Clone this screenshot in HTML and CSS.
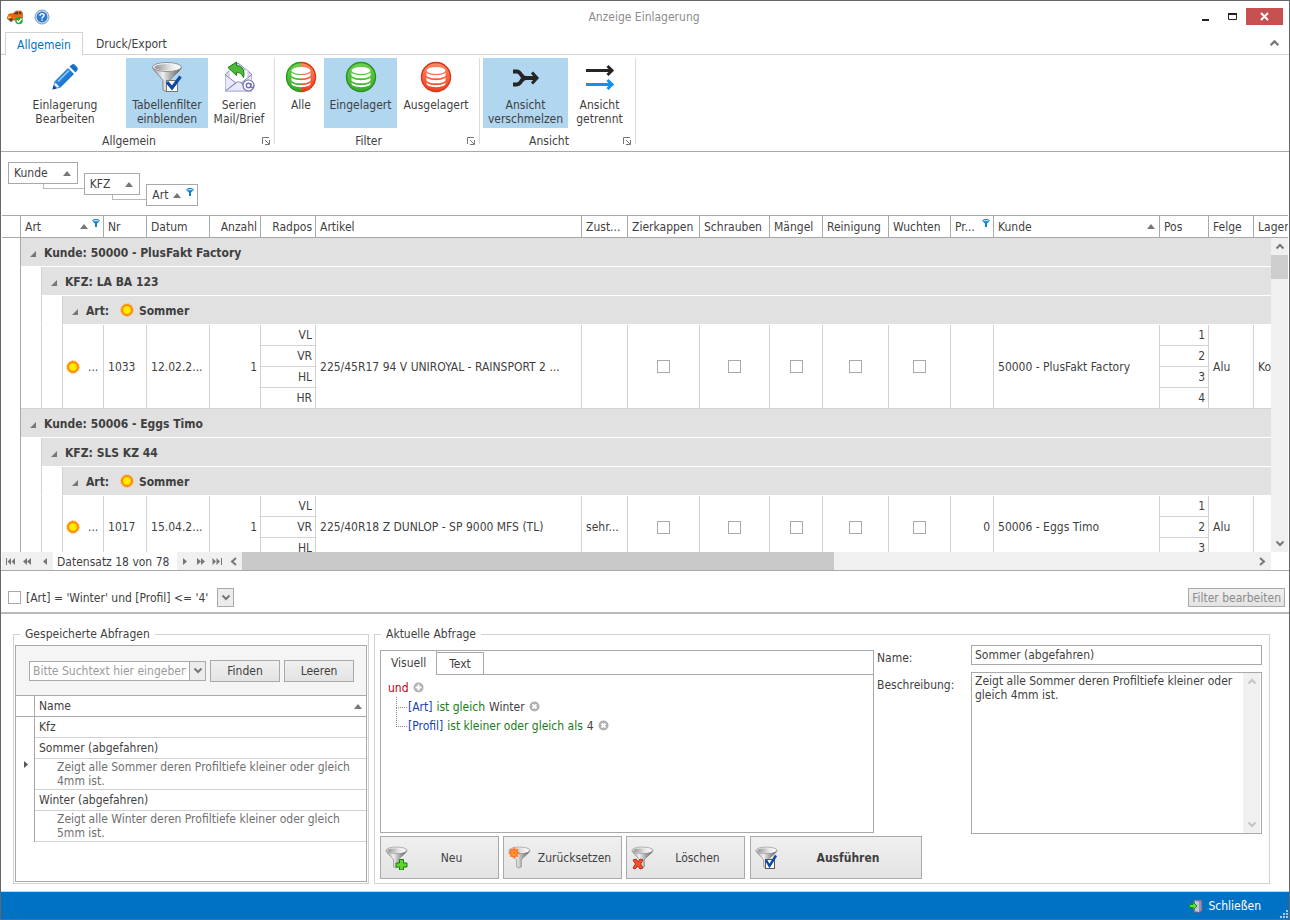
FILE: index.html
```
<!DOCTYPE html>
<html lang="de">

<head>
    <meta charset="utf-8">
    <meta name="viewport" content="width=device-width, initial-scale=1">
    <title>Anzeige Einlagerung</title>
    <link rel="stylesheet" href="styles.css">
</head>

<body>
    <!-- shared icons -->
    <svg class="sprite" aria-hidden="true">
        <defs>
            <linearGradient id="metal" x1="0" x2="1" y1="0" y2="0">
                <stop offset="0" stop-color="#9a9a9a" />
                <stop offset="0.35" stop-color="#f0f0f0" />
                <stop offset="0.6" stop-color="#b0b0b0" />
                <stop offset="1" stop-color="#5d5d5d" />
            </linearGradient>
            <linearGradient id="metalTop" x1="0" x2="1" y1="0" y2="0">
                <stop offset="0" stop-color="#8f8f8f" />
                <stop offset="0.6" stop-color="#e2e2e2" />
                <stop offset="1" stop-color="#ffffff" />
            </linearGradient>
            <linearGradient id="green" x1="0" x2="0" y1="0" y2="1">
                <stop offset="0" stop-color="#6fd04f" />
                <stop offset="1" stop-color="#35ab2a" />
            </linearGradient>
            <linearGradient id="red" x1="0" x2="0" y1="0" y2="1">
                <stop offset="0" stop-color="#ff8a62" />
                <stop offset="1" stop-color="#f2401f" />
            </linearGradient>
            <linearGradient id="pen" x1="0" x2="1" y1="0" y2="1">
                <stop offset="0" stop-color="#3a9af0" />
                <stop offset="1" stop-color="#0a5fc0" />
            </linearGradient>
            <radialGradient id="sunFill">
                <stop offset="0.4" stop-color="#ffee00" />
                <stop offset="1" stop-color="#ffd000" />
            </radialGradient>
        </defs>
        <symbol id="funnel" viewBox="0 0 32 32">
            <path d="M1.500 6C2 10 9 14.500 12 19.500V29L15 30.500L18.500 29V19.500C22 14.500 30 10 30.500 6Z" fill="url(#metal)" stroke="#707070" stroke-width="0.800" />
            <ellipse cx="16" cy="6" rx="14.500" ry="4.500" fill="#f2f2f2" stroke="#808080" stroke-width="0.800" />
            <ellipse cx="16" cy="6.300" rx="12.500" ry="3.300" fill="url(#metalTop)" />
        </symbol>
        <symbol id="sun" viewBox="0 0 14 14">
            <circle cx="7" cy="7" r="5" fill="url(#sunFill)" stroke="#ff8a00" stroke-width="2" />
            <circle cx="7" cy="7" r="6.200" fill="none" stroke="#ff9a20" stroke-width="1" stroke-dasharray="1.500 1.200" />
        </symbol>
        <symbol id="disks" viewBox="0 0 32 32">
            <g fill="#fff">
                <ellipse cx="16" cy="9.500" rx="9.500" ry="3.500" />
                <path d="M6.500 11.500C9 15 23 15 25.500 11.500V14.500C23 18.300 9 18.300 6.500 14.500Z" />
                <path d="M6.500 16.500C9 20 23 20 25.500 16.500V19.500C23 23.300 9 23.300 6.500 19.500Z" />
                <path d="M6.500 21.500C9 25 23 25 25.500 21.500V23C23 27.200 9 27.200 6.500 23Z" />
            </g>
        </symbol>
        <symbol id="pin" viewBox="0 0 8 8">
            <path d="M0.500 2L3 4.500V8H5V4.500L7.500 2Z" fill="#0f80d0" />
            <ellipse cx="4" cy="1.700" rx="3.500" ry="1.200" fill="#bfe0f6" stroke="#0f80d0" />
        </symbol>
        <symbol id="up" viewBox="0 0 8 5">
            <path d="M0 5L4 0L8 5Z" fill="#777" />
        </symbol>
        <symbol id="open" viewBox="0 0 6 6">
            <path d="M6 0V6H0Z" fill="#777" />
        </symbol>
        <symbol id="chevUp" viewBox="0 0 10 7">
            <path d="M1.500 5.500L5 2L8.500 5.500" fill="none" stroke="currentColor" stroke-width="2" />
        </symbol>
        <symbol id="chevDown" viewBox="0 0 10 7">
            <path d="M1.500 1.500L5 5L8.500 1.500" fill="none" stroke="currentColor" stroke-width="2" />
        </symbol>
        <symbol id="launcher" viewBox="0 0 8 8">
            <path d="M0.500 7V0.500H7M3 3L7 7M7.500 3V7.500H3" fill="none" stroke="#777" />
        </symbol>
    </svg>

    <div class="window">
        <header class="titlebar">
            <svg class="icon-16" viewBox="0 0 16 16">
                <path d="M0.500 8L2 5L6 4.500L9 2H14L15.500 4V9L13 11H2L0.500 10Z" fill="#ec6a0c" stroke="#b84e08" stroke-width="0.600" />
                <path d="M6.500 5L9.300 3H11V5.500Z M12 3H13.800L14.500 5H12Z" fill="#4a3a30" />
                <circle cx="4" cy="11" r="1.700" fill="#444" />
                <path d="M1 8.300H4" stroke="#ffe27a" stroke-width="1.200" />
                <circle cx="12" cy="11.500" r="3.800" fill="#36a33a" />
                <path d="M9.800 11.500L11.600 13.300L14.500 9.800" fill="none" stroke="#fff" stroke-width="1.400" />
            </svg>
            <svg class="icon-16" viewBox="0 0 16 16">
                <circle cx="8" cy="8" r="7" fill="#c9dcf0" stroke="#7f9fc4" />
                <circle cx="8" cy="8" r="5.400" fill="#2f78cc" />
                <path d="M6 6.700C6 4.200 10 4.200 10 6.500C10 7.900 8 7.800 8 9.400M8 10.400V11.800" fill="none" stroke="#fff" stroke-width="1.500" />
            </svg>
            <h1>Anzeige Einlagerung</h1>
            <div class="win-buttons">
                <button class="win-btn" aria-label="Minimieren"><svg width="9" height="9"><path d="M1 8H8" stroke="#222" stroke-width="2" /></svg></button>
                <button class="win-btn" aria-label="Maximieren"><svg width="9" height="9"><path d="M0.500 1.500V7.500H8.500V1.500" fill="none" stroke="#222" /><path d="M0 2H9" stroke="#222" stroke-width="2" /></svg></button>
                <button class="win-btn win-close" aria-label="Beenden"><svg width="9" height="9"><path d="M1 1L8 8M8 1L1 8" stroke="#fff" stroke-width="2" /></svg></button>
            </div>
        </header>

        <nav class="tabs">
            <button class="tab active">Allgemein</button>
            <button class="tab">Druck/Export</button>
            <button class="collapse" aria-label="Menüband minimieren"><svg width="11" height="8"><use href="#chevUp" /></svg></button>
        </nav>

        <section class="ribbon">
            <div class="group">
                <div class="group-buttons">
                    <button class="tool tool-edit">
                        <svg viewBox="0 0 32 32">
                            <path d="M3.500 28.500L5.500 20.500L19 7L25 13L11.500 26.500Z" fill="url(#pen)" />
                            <path d="M6.200 21.500L10.500 25.800L8 26.800L5.200 24Z" fill="#e8f3ff" />
                            <path d="M3.500 28.500L4.500 24.500L7.500 27.500Z" fill="#084a94" />
                            <path d="M9 20.500L20 9.500" stroke="#9bd0ff" stroke-width="1.500" />
                            <path d="M20.500 5.500L23 3.500Q24.500 2.500 26 4L28 6Q29.500 7.500 28.500 9L26.500 11.500Z" fill="#176fd2" />
                        </svg>
                        <span>Einlagerung<br>Bearbeiten</span>
                    </button>
                    <button class="tool tool-filter active">
                        <svg viewBox="0 0 32 32">
                            <use href="#funnel" width="32" height="32" />
                            <rect x="15.500" y="19.500" width="11" height="11" fill="#fff" stroke="#777" />
                            <path d="M16 21L21 27L29.500 15.500" fill="none" stroke="#0d47a8" stroke-width="3.200" />
                        </svg>
                        <span>Tabellenfilter<br>einblenden</span>
                    </button>
                    <button class="tool tool-mail">
                        <svg viewBox="0 0 32 32">
                            <path d="M2.500 13L15 2L28.500 13V30H2.500Z" fill="#d9d9f2" stroke="#8a8ac4" />
                            <path d="M6 9H25V18L16 23L6 18Z" fill="#fff" stroke="#c5c5e2" />
                            <path d="M2.500 14L13 22L2.500 30M28.500 14L18 22L28.500 30M3 29.500L13 21.500Q15.500 20 18 21.500L28 29.500" fill="#e9e9fa" stroke="#8a8ac4" />
                            <path d="M5 6.500L13.500 1V4.500C20 5 22 10 20.500 16.500C18.500 12.500 17 11.500 13.500 11.500V14.500Z" fill="#4cba35" stroke="#1d7a16" />
                            <circle cx="25.500" cy="24.500" r="5.500" fill="#fff" stroke="#6f6fb4" stroke-width="1.200" />
                            <circle cx="25.500" cy="24.500" r="2.200" fill="none" stroke="#6f6fb4" stroke-width="1.400" />
                            <path d="M28 22V26.500Q30 27.500 31 24.500" fill="none" stroke="#6f6fb4" stroke-width="1.200" />
                        </svg>
                        <span>Serien<br>Mail/Brief</span>
                    </button>
                </div>
                <div class="caption"><span>Allgemein</span><svg width="8" height="8"><use href="#launcher" /></svg></div>
            </div>
            <div class="group">
                <div class="group-buttons">
                    <button class="tool tool-all">
                        <svg viewBox="0 0 32 32">
                            <path d="M16 0.800A15.200 15.200 0 0 0 16 31.200Z" fill="#2b951f" />
                            <path d="M16 0.800A15.200 15.200 0 0 1 16 31.200Z" fill="#d8351a" />
                            <path d="M16 2.200A13.800 13.800 0 0 0 16 29.800Z" fill="url(#green)" />
                            <path d="M16 2.200A13.800 13.800 0 0 1 16 29.800Z" fill="url(#red)" />
                            <use href="#disks" width="32" height="32" />
                        </svg>
                        <span>Alle</span>
                    </button>
                    <button class="tool tool-in active">
                        <svg viewBox="0 0 32 32">
                            <circle cx="16" cy="16" r="14.500" fill="url(#green)" stroke="#2b951f" stroke-width="1.400" />
                            <use href="#disks" width="32" height="32" />
                        </svg>
                        <span>Eingelagert</span>
                    </button>
                    <button class="tool tool-out">
                        <svg viewBox="0 0 32 32">
                            <circle cx="16" cy="16" r="14.500" fill="url(#red)" stroke="#d8351a" stroke-width="1.400" />
                            <use href="#disks" width="32" height="32" />
                        </svg>
                        <span>Ausgelagert</span>
                    </button>
                </div>
                <div class="caption"><span>Filter</span><svg width="8" height="8"><use href="#launcher" /></svg></div>
            </div>
            <div class="group">
                <div class="group-buttons">
                    <button class="tool tool-merge active">
                        <svg viewBox="0 0 32 32">
                            <path d="M3 10.500H7Q9 10.500 11 13.500Q13 17 16 17H27M3 23.500H7Q9 23.500 11 20.500Q13 17 16 17" fill="none" stroke="#252525" stroke-width="3.800" />
                            <path d="M22 11.500L27 17L22 22.500" fill="none" stroke="#252525" stroke-width="3" />
                        </svg>
                        <span>Ansicht<br>verschmelzen</span>
                    </button>
                    <button class="tool tool-split">
                        <svg viewBox="0 0 32 32">
                            <path d="M2 9.500H27M23.500 5L28 9.500L23.500 14" fill="none" stroke="#252525" stroke-width="3" />
                            <path d="M2 23.500H27M23.500 19L28 23.500L23.500 28" fill="none" stroke="#0c93f0" stroke-width="3" />
                        </svg>
                        <span>Ansicht<br>getrennt</span>
                    </button>
                </div>
                <div class="caption"><span>Ansicht</span><svg width="8" height="8"><use href="#launcher" /></svg></div>
            </div>
        </section>

        <section class="group-panel">
            <button class="chip">Kunde <svg class="chip-up" width="8" height="5"><use href="#up" /></svg></button>
            <button class="chip">KFZ <svg class="chip-up" width="8" height="5"><use href="#up" /></svg></button>
            <button class="chip">Art <svg width="8" height="5"><use href="#up" /></svg><svg class="pin" width="8" height="8"><use href="#pin" /></svg></button>
        </section>

        <main class="grid">
            <table class="data">
                <colgroup>
                    <col class="w-indicator"><col class="w-indent"><col class="w-indent"><col class="w-art"><col class="w-nr">
                    <col class="w-datum"><col class="w-anzahl"><col class="w-radpos"><col class="w-artikel"><col class="w-zustand">
                    <col class="w-zier"><col class="w-schrauben"><col class="w-maengel"><col class="w-reinigung"><col class="w-wuchten">
                    <col class="w-profil"><col class="w-kunde"><col class="w-pos"><col class="w-felge"><col>
                </colgroup>
                <thead>
                    <tr>
                        <th></th>
                        <th colspan="3"><div class="th-in">Art <svg class="push" width="8" height="5"><use href="#up" /></svg><svg class="pin" width="8" height="8"><use href="#pin" /></svg></div></th>
                        <th>Nr</th>
                        <th>Datum</th>
                        <th class="num">Anzahl</th>
                        <th class="num">Radpos</th>
                        <th>Artikel</th>
                        <th>Zust...</th>
                        <th>Zierkappen</th>
                        <th>Schrauben</th>
                        <th>Mängel</th>
                        <th>Reinigung</th>
                        <th>Wuchten</th>
                        <th><div class="th-in">Pr... <svg class="pin push" width="8" height="8"><use href="#pin" /></svg></div></th>
                        <th><div class="th-in">Kunde <svg class="push" width="8" height="5"><use href="#up" /></svg></div></th>
                        <th>Pos</th>
                        <th>Felge</th>
                        <th>Lager</th>
                    </tr>
                </thead>
                <tbody>
                    <tr class="band">
                        <td class="edge"></td>
                        <td colspan="19" class="band-cell"><svg width="6" height="6"><use href="#open" /></svg>Kunde: 50000 - PlusFakt Factory</td>
                    </tr>
                    <tr class="band">
                        <td class="edge"></td>
                        <td></td>
                        <td colspan="18" class="band-cell"><svg width="6" height="6"><use href="#open" /></svg>KFZ: LA BA 123</td>
                    </tr>
                    <tr class="band">
                        <td class="edge"></td>
                        <td></td>
                        <td></td>
                        <td colspan="17" class="band-cell"><svg width="6" height="6"><use href="#open" /></svg>Art: <svg class="sun" width="14" height="14"><use href="#sun" /></svg>Sommer</td>
                    </tr>
                    <tr>
                        <td rowspan="4" class="edge"></td>
                        <td rowspan="4"></td>
                        <td rowspan="4"></td>
                        <td rowspan="4"><div class="art"><svg width="14" height="14"><use href="#sun" /></svg>...</div></td>
                        <td rowspan="4">1033</td>
                        <td rowspan="4">12.02.2...</td>
                        <td rowspan="4" class="num">1</td>
                        <td class="num sub">VL</td>
                        <td rowspan="4">225/45R17 94 V UNIROYAL - RAINSPORT 2 ...</td>
                        <td rowspan="4"></td>
                        <td rowspan="4" class="mid"><input type="checkbox" aria-label="Zierkappen"></td>
                        <td rowspan="4" class="mid"><input type="checkbox" aria-label="Schrauben"></td>
                        <td rowspan="4" class="mid"><input type="checkbox" aria-label="Mängel"></td>
                        <td rowspan="4" class="mid"><input type="checkbox" aria-label="Reinigung"></td>
                        <td rowspan="4" class="mid"><input type="checkbox" aria-label="Wuchten"></td>
                        <td rowspan="4" class="num"></td>
                        <td rowspan="4">50000 - PlusFakt Factory</td>
                        <td class="num sub">1</td>
                        <td rowspan="4">Alu</td>
                        <td rowspan="4">Ko</td>
                    </tr>
                    <tr><td class="num sub">VR</td><td class="num sub">2</td></tr>
                    <tr><td class="num sub">HL</td><td class="num sub">3</td></tr>
                    <tr><td class="num sub">HR</td><td class="num sub">4</td></tr>
                    <tr class="band">
                        <td class="edge"></td>
                        <td colspan="19" class="band-cell"><svg width="6" height="6"><use href="#open" /></svg>Kunde: 50006 - Eggs Timo</td>
                    </tr>
                    <tr class="band">
                        <td class="edge"></td>
                        <td></td>
                        <td colspan="18" class="band-cell"><svg width="6" height="6"><use href="#open" /></svg>KFZ: SLS KZ 44</td>
                    </tr>
                    <tr class="band">
                        <td class="edge"></td>
                        <td></td>
                        <td></td>
                        <td colspan="17" class="band-cell"><svg width="6" height="6"><use href="#open" /></svg>Art: <svg class="sun" width="14" height="14"><use href="#sun" /></svg>Sommer</td>
                    </tr>
                    <tr>
                        <td rowspan="3" class="edge"></td>
                        <td rowspan="3"></td>
                        <td rowspan="3"></td>
                        <td rowspan="3"><div class="art"><svg width="14" height="14"><use href="#sun" /></svg>...</div></td>
                        <td rowspan="3">1017</td>
                        <td rowspan="3">15.04.2...</td>
                        <td rowspan="3" class="num">1</td>
                        <td class="num sub">VL</td>
                        <td rowspan="3">225/40R18 Z DUNLOP - SP 9000 MFS (TL)</td>
                        <td rowspan="3">sehr...</td>
                        <td rowspan="3" class="mid"><input type="checkbox" aria-label="Zierkappen"></td>
                        <td rowspan="3" class="mid"><input type="checkbox" aria-label="Schrauben"></td>
                        <td rowspan="3" class="mid"><input type="checkbox" aria-label="Mängel"></td>
                        <td rowspan="3" class="mid"><input type="checkbox" aria-label="Reinigung"></td>
                        <td rowspan="3" class="mid"><input type="checkbox" aria-label="Wuchten"></td>
                        <td rowspan="3" class="num">0</td>
                        <td rowspan="3">50006 - Eggs Timo</td>
                        <td class="num sub">1</td>
                        <td rowspan="3">Alu</td>
                        <td rowspan="3"></td>
                    </tr>
                    <tr><td class="num sub">VR</td><td class="num sub">2</td></tr>
                    <tr><td class="num sub">HL</td><td class="num sub">3</td></tr>
                </tbody>
            </table>
            <div class="vscroll">
                <svg width="10" height="7"><use href="#chevUp" /></svg>
                <div class="vthumb"></div>
                <svg width="10" height="7"><use href="#chevDown" /></svg>
            </div>
        </main>

        <div class="navigator">
            <div class="nav-buttons">
                <button aria-label="Erster"><svg width="10" height="7"><path d="M0.500 0V7" stroke="#777" /><path d="M5 0V7L1.500 3.500ZM9 0V7L5.500 3.500Z" fill="#777" /></svg></button>
                <button aria-label="Seite zurück"><svg width="9" height="7"><path d="M4 0V7L0 3.500ZM8 0V7L4 3.500Z" fill="#777" /></svg></button>
                <button aria-label="Zurück"><svg width="4" height="7"><path d="M4 0V7L0 3.500Z" fill="#777" /></svg></button>
            </div>
            <span class="position">Datensatz 18 von 78</span>
            <div class="nav-buttons">
                <button aria-label="Weiter"><svg width="4" height="7"><path d="M0 0V7L4 3.500Z" fill="#777" /></svg></button>
                <button aria-label="Seite vor"><svg width="9" height="7"><path d="M0 0V7L4 3.500ZM4 0V7L8 3.500Z" fill="#777" /></svg></button>
                <button aria-label="Letzter"><svg width="10" height="7"><path d="M0.500 0V7L4 3.500ZM4.500 0V7L8 3.500Z" fill="#777" /><path d="M9.500 0V7" stroke="#777" /></svg></button>
            </div>
            <div class="hscroll">
                <svg width="7" height="9"><path d="M6 1L2 4.500L6 8" fill="none" stroke="#777" stroke-width="2" /></svg>
                <div class="htrack"><div class="hthumb"></div></div>
                <svg width="7" height="9"><path d="M1 1L5 4.500L1 8" fill="none" stroke="#777" stroke-width="2" /></svg>
            </div>
        </div>

        <div class="filterbar">
            <input type="checkbox" id="filterOn">
            <label for="filterOn">[Art] = 'Winter' und [Profil] &lt;= '4'</label>
            <button class="drop" aria-label="Filterverlauf"><svg width="10" height="7"><use href="#chevDown" /></svg></button>
            <button class="btn edit-filter" disabled>Filter bearbeiten</button>
        </div>

        <section class="queries">
            <fieldset class="saved">
                <legend>Gespeicherte Abfragen</legend>
                <div class="saved-box">
                    <div class="search">
                        <div class="combo">
                            <input type="text" placeholder="Bitte Suchtext hier eingeben..." aria-label="Suchtext">
                            <button aria-label="Verlauf"><svg width="10" height="7"><use href="#chevDown" /></svg></button>
                        </div>
                        <button class="btn">Finden</button>
                        <button class="btn">Leeren</button>
                    </div>
                    <table class="list">
                        <colgroup><col class="w-indicator"><col></colgroup>
                        <thead>
                            <tr><th></th><th><div class="th-in">Name <svg class="push" width="8" height="5"><use href="#up" /></svg></div></th></tr>
                        </thead>
                        <tbody>
                            <tr><td></td><td>Kfz</td></tr>
                            <tr><td rowspan="2" class="current"><svg width="4" height="7"><path d="M0 0V7L4 3.500Z" fill="#555" /></svg></td><td>Sommer (abgefahren)</td></tr>
                            <tr><td class="desc">Zeigt alle Sommer deren Profiltiefe kleiner oder gleich 4mm ist.</td></tr>
                            <tr><td rowspan="2"></td><td>Winter (abgefahren)</td></tr>
                            <tr><td class="desc">Zeigt alle Winter deren Profiltiefe kleiner oder gleich 5mm ist.</td></tr>
                        </tbody>
                    </table>
                </div>
            </fieldset>

            <fieldset class="current-query">
                <legend>Aktuelle Abfrage</legend>
                <div class="query-top">
                    <div class="editor">
                        <div class="editor-tabs">
                            <button class="active">Visuell</button>
                            <button>Text</button>
                        </div>
                        <div class="tree">
                            <div class="tree-row"><span class="op">und</span><svg width="11" height="11"><circle cx="5.500" cy="5.500" r="5" fill="#b0b0b0" /><path d="M5.500 2.500V8.500M2.500 5.500H8.500" stroke="#fff" stroke-width="2" /></svg></div>
                            <ul>
                                <li class="tree-row"><span class="field">[Art]</span> <span class="cond">ist gleich</span> <span>Winter</span><svg width="11" height="11"><circle cx="5.500" cy="5.500" r="5" fill="#b0b0b0" /><path d="M3.500 3.500L7.500 7.500M7.500 3.500L3.500 7.500" stroke="#fff" stroke-width="2" /></svg></li>
                                <li class="tree-row"><span class="field">[Profil]</span> <span class="cond">ist kleiner oder gleich als</span> <span>4</span><svg width="11" height="11"><circle cx="5.500" cy="5.500" r="5" fill="#b0b0b0" /><path d="M3.500 3.500L7.500 7.500M7.500 3.500L3.500 7.500" stroke="#fff" stroke-width="2" /></svg></li>
                            </ul>
                        </div>
                    </div>
                    <div class="form">
                        <label for="name">Name:</label>
                        <input type="text" id="name" value="Sommer (abgefahren)">
                        <label for="text">Beschreibung:</label>
                        <div class="memo">
                            <textarea id="text">Zeigt alle Sommer deren Profiltiefe kleiner oder gleich 4mm ist.</textarea>
                            <div class="memo-scroll">
                                <svg width="10" height="7"><use href="#chevUp" /></svg>
                                <svg width="10" height="7"><use href="#chevDown" /></svg>
                            </div>
                        </div>
                    </div>
                </div>
                <div class="actions">
                    <button class="btn action">
                        <svg viewBox="0 0 24 24"><use href="#funnel" width="23" height="23" /><path d="M14.500 13.500H18.500V17H22V21H18.500V24H14.500V21H11V17H14.500Z" fill="#5fd62e" stroke="#1c7a12" /></svg>
                        <span>Neu</span>
                    </button>
                    <button class="btn action">
                        <svg viewBox="0 0 24 24"><use href="#funnel" width="23" height="23" /><circle cx="6" cy="7" r="3.600" fill="#ffd23a" stroke="#ff7a2a" stroke-width="2" /><path d="M6 1V13M0 7H12M2 3L10 11M10 3L2 11" stroke="#ff6a2a" stroke-width="0.800" /></svg>
                        <span>Zurücksetzen</span>
                    </button>
                    <button class="btn action">
                        <svg viewBox="0 0 24 24"><use href="#funnel" width="23" height="23" /><path d="M2 14L5 13L7 16L9 13L12 14L9.500 18L12 22L9 23L7 20L4 23L2 22L4.500 18Z" fill="#f2502e" stroke="#b62a12" /></svg>
                        <span>Löschen</span>
                    </button>
                    <button class="btn action run">
                        <svg viewBox="0 0 24 24"><use href="#funnel" width="23" height="23" /><rect x="10.500" y="13.500" width="9" height="9" fill="#fff" stroke="#555" /><path d="M11 14L14.500 20L21 9.500" fill="none" stroke="#0d47a8" stroke-width="2.400" /></svg>
                        <span>Ausführen</span>
                    </button>
                </div>
            </fieldset>
        </section>

        <footer class="status">
            <button class="close-btn">
                <svg width="14" height="14"><path d="M5 1H13V12L10 13.500H5Z" fill="#8f93b5" stroke="#5d6088" /><path d="M6 1.500L10 3V13L6 11.500Z" fill="#c3c6dc" /><path d="M0.500 5.500H4V3L8 7L4 11V8.500H0.500Z" fill="#5fe02e" stroke="#1b8a12" /></svg>
                Schließen
            </button>
            <svg class="grip" width="9" height="9"><path d="M6 0H8V2H6ZM3 3H5V5H3ZM6 3H8V5H6ZM0 6H2V8H0ZM3 6H5V8H3ZM6 6H8V8H6Z" fill="#a9c9e8" /></svg>
        </footer>
    </div>
</body>

</html>
```
FILE: styles.css
```
* {
    box-sizing: border-box;
}

body {
    margin: 0;
    background: #fff;
    color: #3f3f3f;
    font-family: "DejaVu Sans Condensed", "DejaVu Sans", sans-serif;
    font-size: 12px;
    line-height: 14px;
}

button,
input,
textarea {
    font: inherit;
    color: inherit;
    margin: 0;
}

button {
    padding: 0;
    border: none;
    background: none;
}

svg {
    display: block;
    flex: none;
}

.sprite {
    position: absolute;
    width: 0;
    height: 0;
}

.window {
    display: flex;
    flex-direction: column;
    min-height: 100vh;
    border: 1px solid #666;
}

/* title bar */
.titlebar {
    display: flex;
    align-items: center;
    gap: 11px;
    height: 31px;
    padding: 0 6px;
}

.icon-16 {
    width: 16px;
    height: 16px;
}

.titlebar h1 {
    flex: 1;
    margin: 0;
    padding-left: 46px;
    font-size: 12px;
    font-weight: normal;
    text-align: center;
    color: #8c8c8c;
}

.win-buttons {
    display: flex;
}

.win-btn {
    display: flex;
    align-items: center;
    justify-content: center;
    width: 27px;
    height: 17px;
}

.win-close {
    width: 37px;
    background: #c75050;
}

/* ribbon */
.tabs {
    display: flex;
    height: 23px;
    padding: 0 9px 0 4px;
    border-bottom: 1px solid #d2d2d2;
}

.tab {
    padding: 2px 13px 0;
}

.tab.active {
    width: 78px;
    height: 23px;
    border: 1px solid #d2d2d2;
    border-bottom: none;
    padding: 1px 0 0;
    background: #fff;
    color: #0072c6;
}

.collapse {
    margin-left: auto;
    color: #777;
}

.ribbon {
    display: flex;
    height: 97px;
    padding: 3px 0 0 3px;
    border-bottom: 1px solid #a9a9a9;
}

.group {
    height: 86px;
    padding-right: 4px;
    margin-right: 3px;
    border-right: 1px solid #dcdcdc;
}

.group-buttons {
    display: flex;
    height: 70px;
}

.tool {
    display: flex;
    flex-direction: column;
    align-items: center;
    gap: 5px;
    padding-top: 3px;
}

.tool svg {
    width: 32px;
    height: 32px;
}

.tool.active {
    background: #b1d6f0;
}

.tool-edit {
    width: 122px;
}

.tool-filter {
    width: 82px;
}

.tool-mail {
    width: 62px;
}

.tool-all {
    width: 46px;
}

.tool-in {
    width: 73px;
}

.tool-out {
    width: 78px;
}

.tool-merge {
    width: 85px;
}

.tool-split {
    width: 63px;
}

.caption {
    display: flex;
    align-items: center;
    height: 25px;
}

.caption span {
    flex: 1;
    padding-right: 8px;
    text-align: center;
}

/* group-by panel */
.group-panel {
    display: flex;
    height: 63px;
    padding: 10px 7px;
}

.chip {
    position: relative;
    display: flex;
    align-items: center;
    height: 22px;
    padding: 0 6px 0 5px;
    margin-right: 6px;
    border: 1px solid #a9a9a9;
    background: #fff;
    gap: 5px;
}

.chip:nth-child(2) {
    margin-top: 11px;
}

.chip:nth-child(3) {
    margin-top: 22px;
    padding-right: 3px;
}

.chip-up {
    margin-left: 10px;
}

/* elbow that links a chip to the next one */
.chip:not(:last-child)::after {
    content: "";
    position: absolute;
    left: 50%;
    right: -8px;
    top: 21px;
    height: 4px;
    border-left: 1px solid #b9b9b9;
    border-bottom: 1px solid #b9b9b9;
}

.chip .pin,
.th-in .pin {
    align-self: flex-start;
    margin-top: 3px;
}

/* data grid */
.grid {
    position: relative;
    flex: 1 0 337px;
    height: 337px;
    overflow: hidden;
    margin: 0 1px;
}

table {
    table-layout: fixed;
    width: 100%;
    border-collapse: separate;
    border-spacing: 0;
}

th,
td {
    padding: 0 4px;
    overflow: hidden;
    font-weight: normal;
    text-align: left;
    white-space: nowrap;
}

.data th {
    height: 23px;
    border-top: 1px solid #a9a9a9;
    border-bottom: 1px solid #a9a9a9;
    border-right: 1px solid #a9a9a9;
}

.data th:last-child,
.data td:last-child[rowspan] {
    border-right: none;
}

.data td {
    border-right: 1px solid #d2d2d2;
    border-bottom: 1px solid #d2d2d2;
}

.data td.sub {
    height: 21px;
}

.data td.edge {
    border-right-color: #a9a9a9;
    border-bottom: none;
}

.band td {
    height: 29px;
    border-bottom-color: #fff;
}

.data .band-cell {
    padding: 1px 0 0 9px;
    border-right: none;
    background: #e1e1e1;
    font-weight: bold;
}

.band-cell svg {
    display: inline-block;
    margin-right: 8px;
}

.band-cell .sun {
    margin: 0 5px 0 7px;
    vertical-align: -2px;
}

.th-in,
.art {
    display: flex;
    align-items: center;
    gap: 4px;
    height: 21px;
}

.art {
    gap: 8px;
    margin-left: -1px;
}

.push {
    margin-left: auto;
}

.th-in .pin {
    margin-right: -1px;
}

.data .num {
    padding-right: 3px;
    text-align: right;
}

.data .mid {
    text-align: center;
}

.w-indicator {
    width: 19px;
}

.w-indent {
    width: 21px;
}

.w-art {
    width: 41px;
}

.w-nr,
.w-profil {
    width: 43px;
}

.w-datum {
    width: 63px;
}

.w-anzahl {
    width: 51px;
}

.w-radpos {
    width: 55px;
}

.w-artikel {
    width: 266px;
}

.w-zustand {
    width: 46px;
}

.w-zier {
    width: 72px;
}

.w-schrauben {
    width: 70px;
}

.w-maengel {
    width: 53px;
}

.w-reinigung {
    width: 66px;
}

.w-wuchten {
    width: 62px;
}

.w-kunde {
    width: 166px;
}

.w-pos {
    width: 49px;
}

.w-felge {
    width: 45px;
}

input[type=checkbox] {
    appearance: none;
    display: block;
    width: 13px;
    height: 13px;
    margin: 0 auto;
    border: 1px solid #a9a9a9;
    background: #fff;
}

input[type=checkbox]:checked {
    background: #0072c6;
}

.vscroll {
    position: absolute;
    top: 23px;
    right: 0;
    bottom: 0;
    display: flex;
    flex-direction: column;
    align-items: center;
    width: 17px;
    padding: 5px 0;
    background: #f0f0f0;
    color: #777;
}

.vthumb {
    width: 17px;
    height: 24px;
    margin: 5px 0 auto;
    background: #cdcdcd;
}

/* record navigator */
.navigator {
    display: flex;
    height: 19px;
    padding: 0 18px 0 1px;
    border-bottom: 1px solid #a9a9a9;
}

.nav-buttons {
    display: flex;
    background: #f0f0f0;
}

.nav-buttons button {
    display: flex;
    align-items: center;
    justify-content: center;
    width: 16px;
}

.nav-buttons:first-child button {
    width: 17px;
}

.position {
    width: 124px;
    padding: 3px 4px 0;
}

.hscroll {
    display: flex;
    flex: 1;
    align-items: center;
    padding: 0 5px;
    background: #f0f0f0;
}

.htrack {
    flex: 1;
    height: 18px;
    margin: 0 5px;
}

.hthumb {
    width: 58.5%;
    height: 18px;
    background: #c9c9c9;
}

/* filter bar */
.filterbar {
    display: flex;
    align-items: center;
    gap: 5px;
    height: 43px;
    padding: 12px 4px 0 7px;
    border-bottom: 2px solid #b9b9b9;
}

.filterbar input {
    margin: 0;
}

.drop,
.combo button {
    display: flex;
    align-items: center;
    justify-content: center;
    width: 17px;
    border: 1px solid #a9a9a9;
    background: #ececec;
    color: #777;
}

.drop {
    height: 19px;
    margin-left: 4px;
}

.btn {
    border: 1px solid #a9a9a9;
    background: linear-gradient(#f0f0f0, #e3e3e3);
}

.edit-filter {
    height: 19px;
    margin-left: auto;
    padding: 0 3px;
    color: #8c8c8c;
}

/* queries */
.queries {
    display: flex;
    gap: 5px;
    padding: 11px 19px 7px 12px;
    border-bottom: 1px solid #d2d2d2;
}

fieldset {
    min-width: 0;
    margin: 0;
    border: 1px solid #d2d2d2;
}

legend {
    margin-left: 5px;
    padding: 0 5px;
    line-height: 18px;
}

.saved {
    width: 356px;
    padding: 2px 1px 0;
}

.saved-box {
    height: 237px;
    border: 1px solid #a9a9a9;
}

.search {
    display: flex;
    align-items: center;
    gap: 4px;
    height: 49px;
    padding: 0 12px 0 13px;
    background: #f5f5f5;
}

.search .btn {
    width: 70px;
    height: 22px;
}

.combo {
    display: flex;
    flex: 1;
    min-width: 0;
    height: 20px;
    border: 1px solid #a9a9a9;
    background: #fff;
}

.combo input {
    flex: 1;
    min-width: 0;
    padding: 0 3px;
    border: none;
    background: none;
}

.combo input::placeholder {
    color: #9b9b9b;
}

.combo button {
    width: 16px;
    border-width: 0 0 0 1px;
}

.list th {
    height: 22px;
    border-top: 1px solid #a9a9a9;
    border-bottom: 1px solid #a9a9a9;
}

.list .th-in {
    height: 20px;
}

.list td {
    height: 21px;
    border-bottom: 1px solid #d2d2d2;
}

.list th:first-child,
.list td[rowspan],
.list tbody tr:first-child td:first-child {
    border-right: 1px solid #a9a9a9;
}

.list td[rowspan],
.list tbody tr:first-child td:first-child {
    border-bottom: none;
}

.list .current {
    padding-left: 8px;
}

.list .desc {
    height: 31px;
    padding: 0 8px 0 22px;
    color: #707070;
    white-space: normal;
}

.current-query {
    flex: 1;
    padding: 2px 7px 4px 5px;
}

.current-query legend {
    margin-left: 1px;
}

.query-top {
    display: flex;
    gap: 3px;
}

.editor {
    flex: 1;
    height: 183px;
    margin-top: 5px;
    border: 1px solid #a9a9a9;
}

.editor-tabs {
    display: flex;
    align-items: flex-end;
    height: 24px;
    border-bottom: 1px solid #a9a9a9;
}

.editor-tabs button {
    height: 22px;
    padding: 0 12px;
    border-top: 1px solid #a9a9a9;
    border-right: 1px solid #a9a9a9;
}

.editor-tabs .active {
    height: 24px;
    margin-bottom: -1px;
    padding: 0 10px;
    border-top: none;
    background: #fff;
}

.tree {
    padding: 3px 7px;
}

.tree-row {
    display: flex;
    align-items: center;
    gap: 4px;
    height: 19px;
}

.tree ul {
    margin: 0;
    padding: 0;
    list-style: none;
}

/* dotted branch in front of each condition */
.tree li {
    position: relative;
    padding-left: 20px;
}

.tree li::before {
    content: "";
    position: absolute;
    left: 8px;
    top: -9px;
    width: 10px;
    height: 19px;
    border-left: 1px dotted #888;
    border-bottom: 1px dotted #888;
}

.tree li:first-child::before {
    top: 0;
    height: 10px;
}

.op {
    color: #c00020;
}

.field {
    color: #1a3fb0;
}

.cond {
    color: #1a7a1a;
}

.form {
    display: grid;
    grid-template-columns: 94px 291px;
    grid-template-rows: 20px 162px;
    row-gap: 7px;
}

.form label {
    padding-top: 6px;
}

.form input {
    padding: 0 3px;
    border: 1px solid #a9a9a9;
}

.memo {
    display: flex;
    padding-right: 1px;
    border: 1px solid #a9a9a9;
}

.memo textarea {
    flex: 1;
    min-width: 0;
    padding: 1px 3px;
    border: none;
    overflow: hidden;
    resize: none;
}

.memo-scroll {
    display: flex;
    flex-direction: column;
    align-items: center;
    justify-content: space-between;
    width: 17px;
    padding: 5px 0;
    background: #f0f0f0;
    color: #c4c4c4;
}

.actions {
    display: flex;
    gap: 4px;
    margin-top: 2px;
}

.action {
    display: flex;
    align-items: center;
    width: 119px;
    height: 43px;
    padding: 0 4px;
}

.action svg {
    width: 24px;
    height: 24px;
}

.action span {
    flex: 1;
}

.run {
    width: 172px;
    margin-left: 1px;
    font-weight: bold;
}

/* status bar */
.status {
    display: flex;
    align-items: center;
    justify-content: flex-end;
    height: 27px;
    background: #0072c6;
    color: #fff;
}

.close-btn {
    display: flex;
    align-items: center;
    gap: 5px;
    margin-right: 18px;
}

.grip {
    align-self: flex-end;
    margin-left: 1px;
}
```
